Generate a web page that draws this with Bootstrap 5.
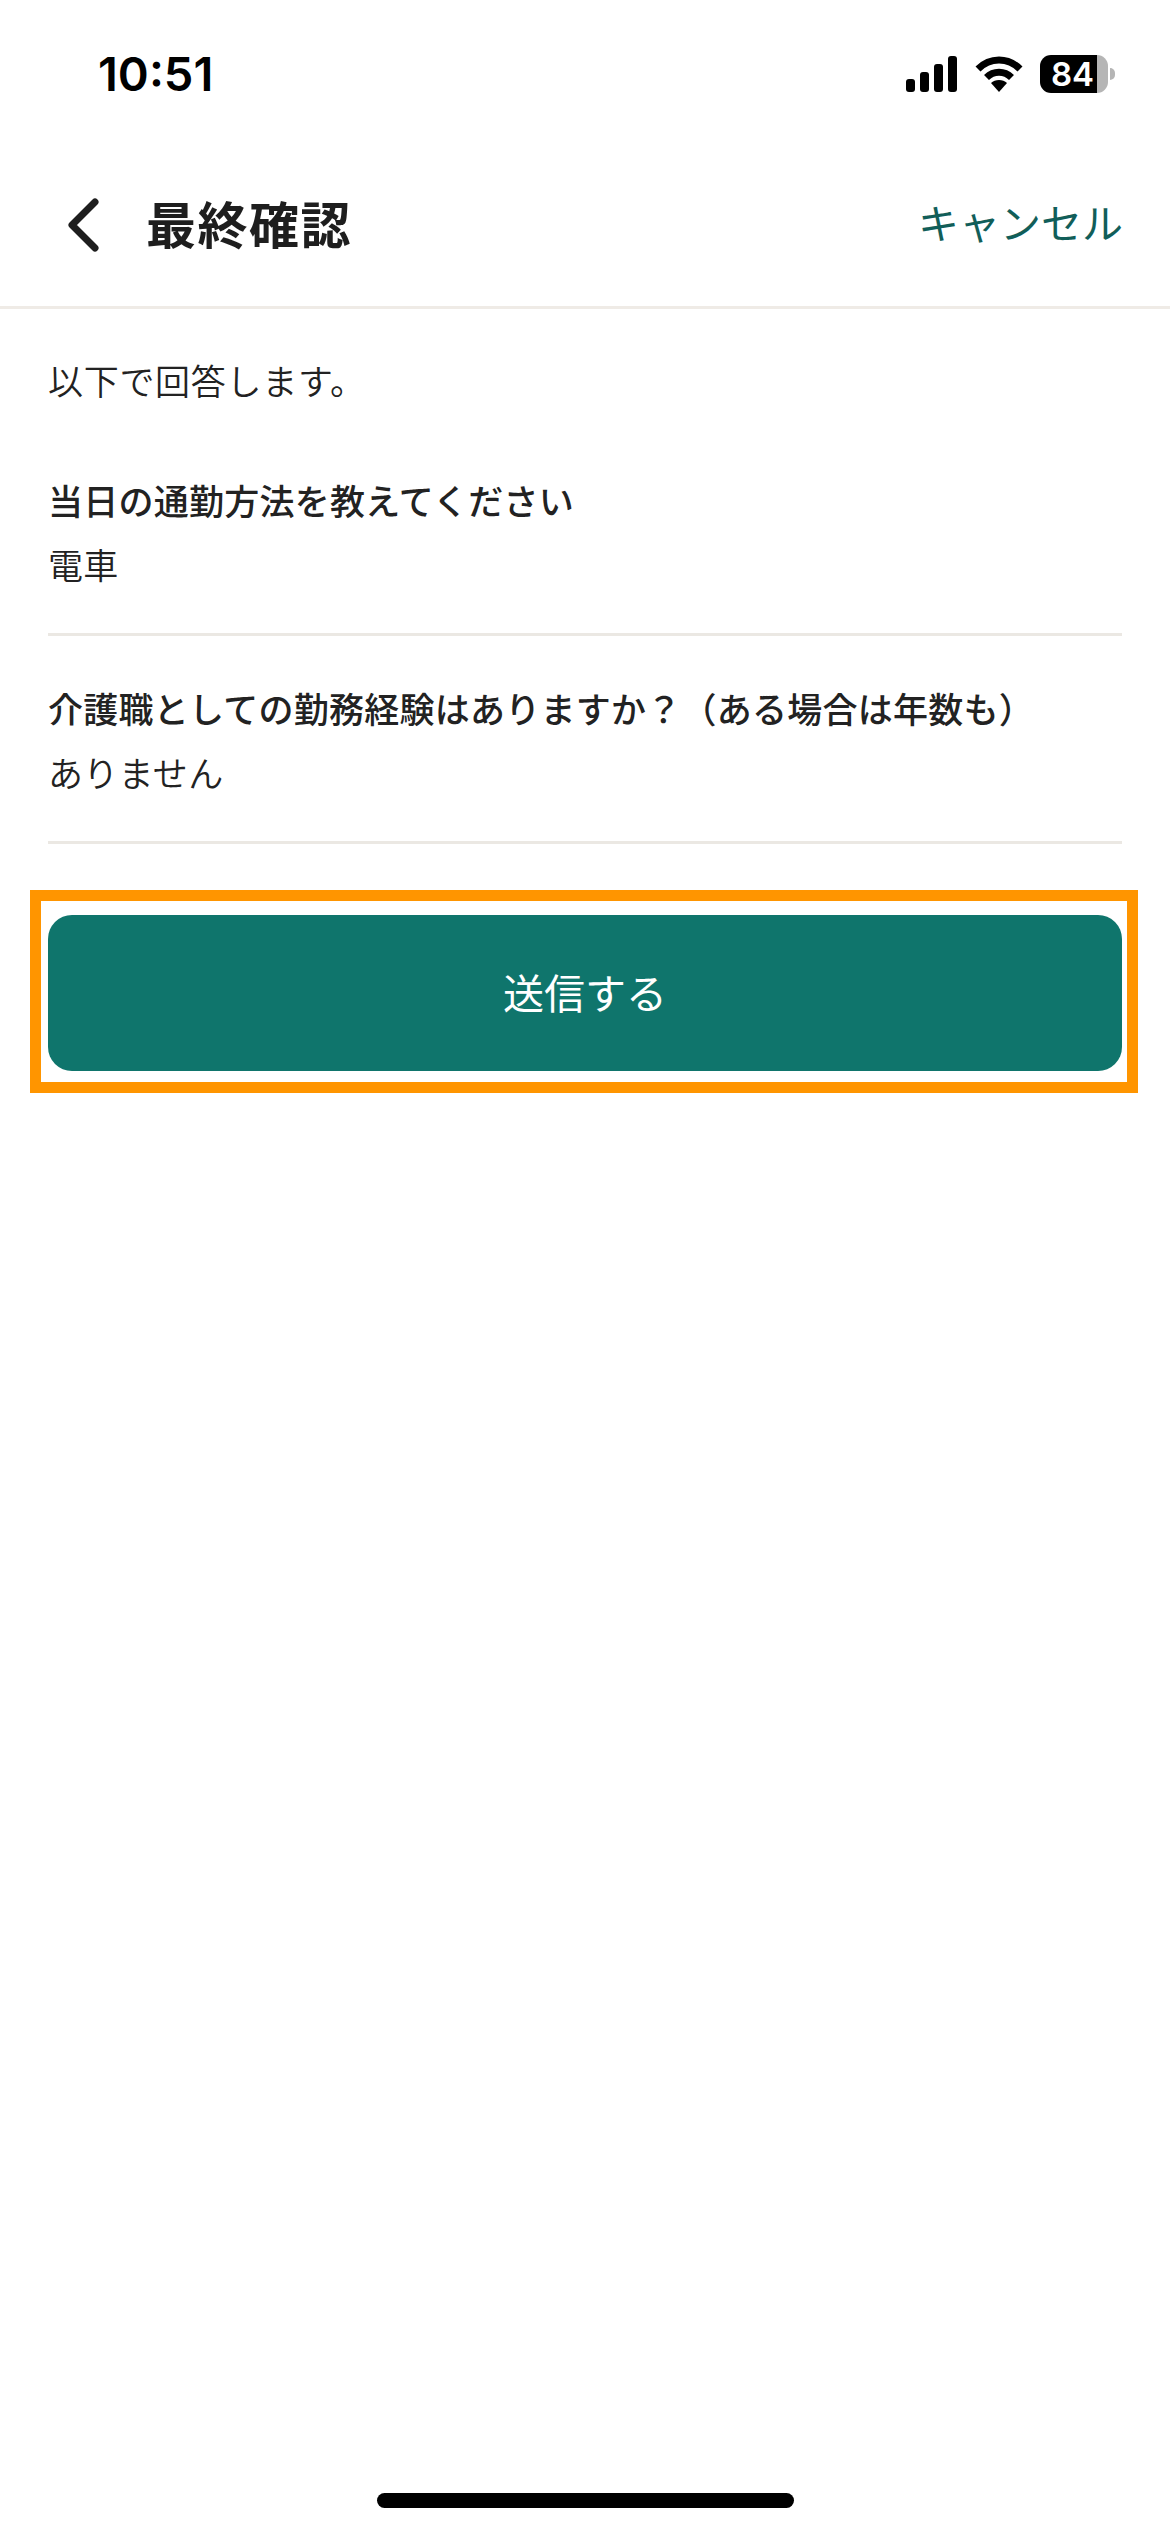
<!DOCTYPE html>
<html lang="ja">
<head>
<meta charset="utf-8">
<title>最終確認</title>
<link href="https://cdn.jsdelivr.net/npm/bootstrap@5.3.0/dist/css/bootstrap.min.css" rel="stylesheet">
<style>
html,body{height:100%;}
body{background:#fff;color:#222;font-family:"Noto Sans CJK JP","Noto Sans",sans-serif;}
.app-page{height:2532px;}
.status-row{height:96px;padding:52px 55px 0 98px;}
.clock{font-family:Inter,"Liberation Sans",sans-serif;font-weight:600;font-size:47px;line-height:46px;color:#000;}
.status-icons{gap:17px;}
.batt{width:68px;height:38px;border-radius:11px;background:linear-gradient(90deg,#000 0,#000 57px,#b5b5b5 57px);color:#fff;font:600 33px/38px Inter,"Liberation Sans",sans-serif;padding-left:11px;}
.batt-wrap{gap:2px;}
.batt-nub{width:5px;height:12px;background:#b5b5b5;border-radius:0 5px 5px 0;}
.head-row{height:166px;padding:0 47px 0 67px;border-bottom:3px solid #efebe6;margin-top:47px;}
.page-title{font-size:50px;font-weight:700;line-height:1;margin:0 0 6px 46px;color:#1e1e1e;letter-spacing:1.5px;}
.cancel-link{font-size:41px;color:#115e59;text-decoration:none;line-height:1;margin-bottom:6px;}
.intro{font-size:35px;font-weight:350;line-height:48px;margin:47px 0 24px;letter-spacing:.7px;}
.content-wrap{padding:0 48px;}
.qa-item{border-bottom:3px solid #ebe8e3;padding:48px 0 45px;}
.qa-q{font-size:35px;font-weight:500;line-height:48px;margin:0;letter-spacing:.25px;}
.qa-a{font-size:35px;font-weight:350;line-height:48px;margin:16px 0 0;letter-spacing:.3px;}
.frame-box{border:11px solid #ff9500;margin:46px 32px 0 30px;padding:14px 5px 11px 7px;}
.send-btn{background:#0f756c;border:0;border-radius:24px;height:156px;font-size:41px;color:#fff;width:100%;padding-bottom:8px;}
.send-btn:hover{background:#0f756c;color:#fff;}
.home-bar{width:417px;height:15px;border-radius:8px;background:#000;margin:auto auto 24px;}
</style>
</head>
<body>
<div class="app-page d-flex flex-column">
  <div class="status-row d-flex justify-content-between align-items-center">
    <span class="clock">10:51</span>
    <div class="status-icons d-flex align-items-center">
      <svg width="52" height="36" viewBox="0 0 52 36" fill="#000"><rect x="0" y="23" width="9" height="13" rx="3"/><rect x="14" y="16" width="9" height="20" rx="3"/><rect x="28" y="8" width="9" height="28" rx="3"/><rect x="42" y="0" width="9" height="36" rx="3"/></svg>
      <svg width="48" height="36" viewBox="0 0 48 36" fill="none" stroke="#000" stroke-width="7"><path d="M3 13 C15 1 33 1 45 13"/><path d="M11.5 21.5 C18.5 14.5 29.5 14.5 36.5 21.5"/><path d="M24 36 L16 27 C20 23 28 23 32 27 Z" fill="#000" stroke="none"/></svg>
      <div class="batt-wrap d-flex align-items-center">
        <div class="batt">84</div>
        <div class="batt-nub"></div>
      </div>
    </div>
  </div>
  <div class="head-row d-flex align-items-center">
    <svg width="33" height="56" viewBox="0 0 33 56" fill="none" stroke="#1e1e1e" stroke-width="7" stroke-linecap="round" stroke-linejoin="round"><path d="M28 5 L5 28 L28 51"/></svg>
    <h1 class="page-title">最終確認</h1>
    <a class="cancel-link ms-auto" href="#">キャンセル</a>
  </div>
  <div class="content-wrap">
    <p class="intro">以下で回答します。</p>
    <div class="qa-item">
      <p class="qa-q">当日の通勤方法を教えてください</p>
      <p class="qa-a">電車</p>
    </div>
    <div class="qa-item">
      <p class="qa-q">介護職としての勤務経験はありますか？（ある場合は年数も）</p>
      <p class="qa-a">ありません</p>
    </div>
  </div>
  <div class="frame-box">
    <button class="btn send-btn" type="button">送信する</button>
  </div>
  <div class="home-bar"></div>
</div>
<script src="https://cdn.jsdelivr.net/npm/bootstrap@5.3.0/dist/js/bootstrap.bundle.min.js"></script>
</body>
</html>
